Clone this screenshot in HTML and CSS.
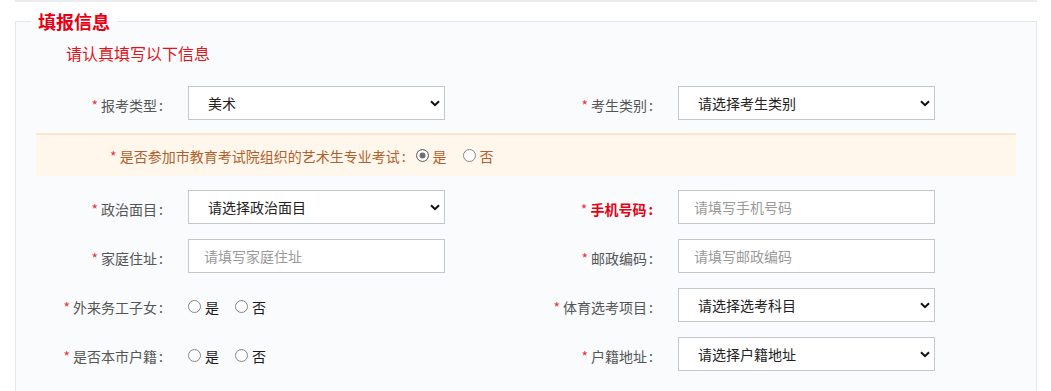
FILE: index.html
```html
<!DOCTYPE html>
<html lang="zh-CN">
<head>
<meta charset="utf-8">
<title>填报信息</title>
<link rel="stylesheet" href="styles.css">
</head>
<body>
<div class="page">
  <div class="topline"></div>
  <fieldset class="panel">
    <legend class="panel-title">填报信息</legend>
    <p class="hint">请认真填写以下信息</p>
    <div class="form">
      <div class="row">
        <div class="field">
          <label class="label"><span class="req">*</span> 报考类型<span class="colon">:</span></label>
          <div class="select-wrap">
            <select class="control select"><option>美术</option></select>
            <svg class="chev" width="10" height="7" viewBox="0 0 10 7"><path d="M1 1.2 5 5.2 9 1.2" fill="none" stroke="#111" stroke-width="2"/></svg>
          </div>
        </div>
        <div class="field">
          <label class="label"><span class="req">*</span> 考生类别<span class="colon">:</span></label>
          <div class="select-wrap">
            <select class="control select"><option>请选择考生类别</option></select>
            <svg class="chev" width="10" height="7" viewBox="0 0 10 7"><path d="M1 1.2 5 5.2 9 1.2" fill="none" stroke="#111" stroke-width="2"/></svg>
          </div>
        </div>
      </div>

      <div class="band">
        <span class="band-label"><span class="req">*</span> 是否参加市教育考试院组织的艺术生专业考试<span class="colon">:</span></span>
        <label class="opt opt-band"><input type="radio" name="art" class="radio" checked>是</label>
        <label class="opt opt-band"><input type="radio" name="art" class="radio">否</label>
      </div>

      <div class="row">
        <div class="field">
          <label class="label"><span class="req">*</span> 政治面目<span class="colon">:</span></label>
          <div class="select-wrap">
            <select class="control select"><option>请选择政治面目</option></select>
            <svg class="chev" width="10" height="7" viewBox="0 0 10 7"><path d="M1 1.2 5 5.2 9 1.2" fill="none" stroke="#111" stroke-width="2"/></svg>
          </div>
        </div>
        <div class="field">
          <label class="label label-strong"><span class="req">*</span> 手机号码<span class="colon">:</span></label>
          <input class="control input" type="text" placeholder="请填写手机号码">
        </div>
      </div>

      <div class="row">
        <div class="field">
          <label class="label"><span class="req">*</span> 家庭住址<span class="colon">:</span></label>
          <input class="control input" type="text" placeholder="请填写家庭住址">
        </div>
        <div class="field">
          <label class="label"><span class="req">*</span> 邮政编码<span class="colon">:</span></label>
          <input class="control input" type="text" placeholder="请填写邮政编码">
        </div>
      </div>

      <div class="row">
        <div class="field">
          <label class="label"><span class="req">*</span> 外来务工子女<span class="colon">:</span></label>
          <div class="radios">
            <label class="opt"><input type="radio" name="migrant" class="radio">是</label>
            <label class="opt"><input type="radio" name="migrant" class="radio">否</label>
          </div>
        </div>
        <div class="field">
          <label class="label"><span class="req">*</span> 体育选考项目<span class="colon">:</span></label>
          <div class="select-wrap">
            <select class="control select"><option>请选择选考科目</option></select>
            <svg class="chev" width="10" height="7" viewBox="0 0 10 7"><path d="M1 1.2 5 5.2 9 1.2" fill="none" stroke="#111" stroke-width="2"/></svg>
          </div>
        </div>
      </div>

      <div class="row">
        <div class="field">
          <label class="label"><span class="req">*</span> 是否本市户籍<span class="colon">:</span></label>
          <div class="radios">
            <label class="opt"><input type="radio" name="local" class="radio">是</label>
            <label class="opt"><input type="radio" name="local" class="radio">否</label>
          </div>
        </div>
        <div class="field">
          <label class="label"><span class="req">*</span> 户籍地址<span class="colon">:</span></label>
          <div class="select-wrap">
            <select class="control select"><option>请选择户籍地址</option></select>
            <svg class="chev" width="10" height="7" viewBox="0 0 10 7"><path d="M1 1.2 5 5.2 9 1.2" fill="none" stroke="#111" stroke-width="2"/></svg>
          </div>
        </div>
      </div>
    </div>
  </fieldset>
</div>
</body>
</html>
```
FILE: styles.css
```css
* { box-sizing: border-box; }

html, body {
  margin: 0;
  background: #ffffff;
}

body {
  font-family: "Noto Sans CJK SC", "Noto Sans", sans-serif;
  font-size: 14px;
  color: #555;
  overflow: hidden;
}

.page {
  padding-left: 15px;
  width: 1037px;
}

.topline {
  height: 2px;
  background: #eaecef;
}

.panel {
  margin: 7px 0 0 0;
  padding: 8px 20px 30px 20px;
  border: 1px solid #e3e6ea;
  background: #f9fbfd;
  min-width: 0;
}

.panel-title {
  margin-left: -5px;
  padding: 0 7px;
  font-size: 18px;
  line-height: 24px;
  font-weight: bold;
  color: #e60012;
}

.hint {
  margin: 0 0 21px 30px;
  font-size: 16px;
  line-height: 24px;
  color: #e2141b;
}

.form {
  display: flex;
  flex-direction: column;
  gap: 15px;
}

.row {
  display: grid;
  grid-template-columns: 490px 490px;
}

.field {
  display: grid;
  grid-template-columns: 152px 257px;
  align-items: center;
  height: 34px;
}

.label {
  text-align: right;
  padding-right: 25px;
  line-height: 20px;
  padding-top: 3px;
  color: #555;
  white-space: nowrap;
}

.colon {
  margin-left: 2px;
}

.label-strong {
  color: #e60012;
  font-weight: bold;
}

.req {
  color: #e8343a;
  font-weight: normal;
}

.control {
  width: 257px;
  height: 34px;
  margin: 0;
  border: 1px solid #c4c7cd;
  border-radius: 0;
  background: #fff;
  font-family: inherit;
  font-size: 14px;
  outline: none;
}

.select-wrap {
  position: relative;
  width: 257px;
  height: 34px;
}

.select {
  appearance: none;
  -webkit-appearance: none;
  padding: 0 24px 0 19px;
  color: #222;
}

.chev {
  position: absolute;
  right: 5px;
  top: 14px;
}

.input {
  padding: 0 15px;
  color: #333;
}

.input::placeholder {
  color: #9a9a9a;
}

.band {
  display: flex;
  align-items: center;
  height: 43px;
  margin: -2px 0 -1px 0;
  padding: 0 0 0 74px;
  border-top: 2px solid #fde5cc;
  background: #fff7ec;
  color: #b0602c;
}

.band-label {
  margin-right: 10px;
  padding-top: 1px;
}

.band .req {
  color: #e8343a;
}

.radios {
  display: flex;
  align-items: center;
  padding-top: 3px;
}

.opt {
  display: inline-flex;
  align-items: center;
  margin-right: 16px;
  color: #1a1a1a;
  line-height: 20px;
}

.opt-band {
  color: #b0602c;
}

.radio {
  appearance: none;
  -webkit-appearance: none;
  width: 13px;
  height: 13px;
  margin: 0 4px 0 0;
  border: 1px solid #858585;
  border-radius: 50%;
  background: #fff;
}

.radio:checked {
  border-color: #6f6f6f;
  background: #6f6f6f;
  box-shadow: inset 0 0 0 2.5px #fff;
}
```
